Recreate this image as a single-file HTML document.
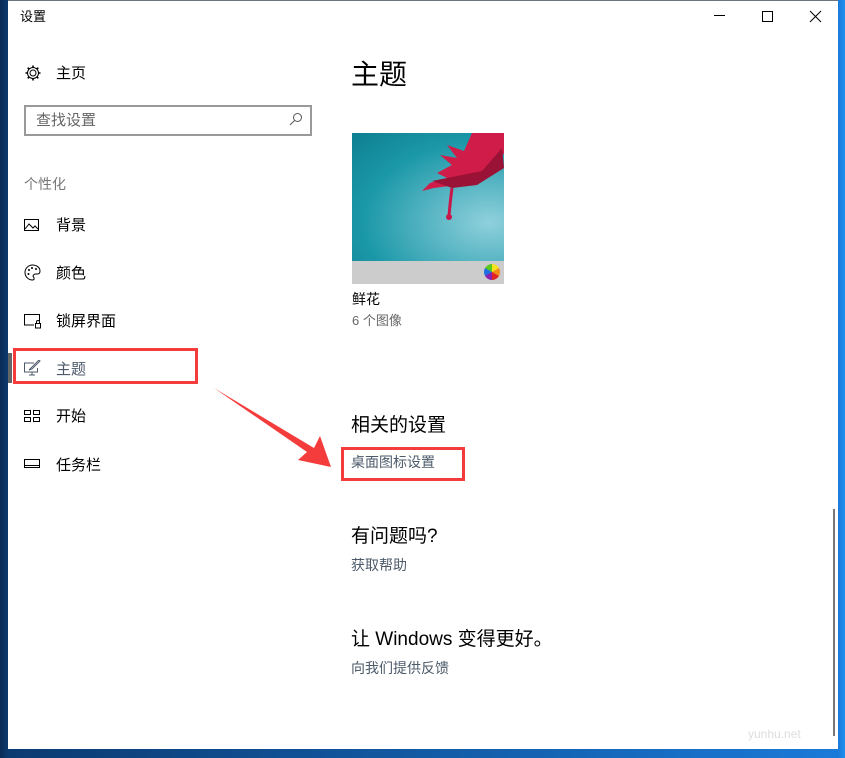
<!DOCTYPE html>
<html><head><meta charset="utf-8">
<style>
*{margin:0;padding:0;box-sizing:border-box}
html,body{width:845px;height:758px;overflow:hidden;font-family:"Liberation Sans","Noto Sans CJK SC",sans-serif}
body{background:linear-gradient(90deg,#0a2a55 0,#0b3a70 8px,#1a7ad8 838px,#1e90f0 845px);position:relative}
.win{position:absolute;left:8px;top:0;width:830px;height:749px;background:#fff;border-top:1px solid #6b7480}
.t{position:absolute;white-space:nowrap}
.nav{font-size:15px;color:#000}
.ic{position:absolute}
.link{color:#4c5a6a;font-size:14px}
.h{font-size:20px;color:#000}
</style></head><body>
<div class="win">
<div class="t" style="left:12px;top:5px;font-size:13px">设置</div>
<div class="t" style="left:706px;top:14px;width:11px;height:1px;background:#000"></div>
<div class="t" style="left:754px;top:10px;width:11px;height:11px;border:1px solid #000"></div>
<svg class="ic" style="left:801px;top:9px" width="13" height="13"><path d="M1 1L12 12M12 1L1 12" stroke="#000" stroke-width="1"/></svg>

<svg class="ic" style="left:16px;top:63px" width="18" height="18" viewBox="0 0 18 18"><circle cx="9" cy="9" r="3" fill="none" stroke="#000"/><path d="M9 1.5v2M9 14.5v2M1.5 9h2M14.5 9h2M3.7 3.7l1.4 1.4M12.9 12.9l1.4 1.4M3.7 14.3l1.4-1.4M12.9 5.1l1.4-1.4" stroke="#000" stroke-width="1.6"/><circle cx="9" cy="9" r="5.5" fill="none" stroke="#000"/></svg>
<div class="t nav" style="left:48px;top:61px">主页</div>
<div class="t" style="left:16px;top:104px;width:288px;height:31px;border:2px solid #999"></div>
<div class="t" style="left:28px;top:108px;font-size:15px;color:#666">查找设置</div>
<svg class="ic" style="left:281px;top:111px" width="14" height="14"><circle cx="8.5" cy="5.5" r="4" fill="none" stroke="#555"/><path d="M5.5 8.5L1 13" stroke="#555"/></svg>
<div class="t" style="left:16px;top:173px;font-size:14px;color:#777">个性化</div>

<svg class="ic" style="left:16px;top:218px" width="16" height="13"><rect x="0.5" y="0.5" width="14" height="11" fill="none" stroke="#000"/><path d="M1 10l4-5 4 4 2-2 3 3" fill="none" stroke="#000"/></svg>
<div class="t nav" style="left:48px;top:213px">背景</div>
<svg class="ic" style="left:16px;top:263px" width="17" height="17"><path d="M8.5 1a7.5 7.5 0 1 0 0 15c2 0 2-2 1-3s0-3 2-3h2c2 0 2.5-1.5 2.5-3C16 3.5 12.5 1 8.5 1z" fill="none" stroke="#000"/><circle cx="5" cy="6" r="1" fill="#000"/><circle cx="8" cy="4" r="1" fill="#000"/><circle cx="12" cy="5" r="1" fill="#000"/><circle cx="4.5" cy="10" r="1" fill="#000"/></svg>
<div class="t nav" style="left:48px;top:261px">颜色</div>
<svg class="ic" style="left:16px;top:313px" width="18" height="15"><path d="M10 11H0.5V0.5h15V7" fill="none" stroke="#000"/><rect x="11.5" y="9.5" width="5" height="4.5" fill="none" stroke="#000"/><path d="M12.5 9.5v-1.5a1.5 1.5 0 0 1 3 0v1.5" fill="none" stroke="#000"/></svg>
<div class="t nav" style="left:48px;top:309px">锁屏界面</div>

<div class="t" style="left:0;top:352px;width:4px;height:30px;background:#666"></div>
<div class="t" style="left:5px;top:347px;width:185px;height:36px;border:3px solid #f43c3c"></div>
<svg class="ic" style="left:16px;top:359px" width="18" height="16"><path d="M10 3H0.5v9h13V8M5 15h6M8 12v3" fill="none" stroke="#4c5a6a"/><path d="M5 10l3-1 8-8-1-1-8 8z" fill="none" stroke="#4c5a6a"/></svg>
<div class="t nav" style="left:48px;top:357px;color:#4c5a6a">主题</div>
<svg class="ic" style="left:16px;top:409px" width="17" height="13"><rect x="0.5" y="0.5" width="6" height="4" fill="none" stroke="#000"/><rect x="9.5" y="0.5" width="6" height="4" fill="none" stroke="#000"/><rect x="0.5" y="7.5" width="6" height="4" fill="none" stroke="#000"/><rect x="9.5" y="7.5" width="6" height="4" fill="none" stroke="#000"/></svg>
<div class="t nav" style="left:48px;top:404px">开始</div>
<svg class="ic" style="left:16px;top:458px" width="17" height="10"><rect x="0.5" y="0.5" width="15" height="8" fill="none" stroke="#000"/><path d="M1 6.5h14" stroke="#000"/></svg>
<div class="t nav" style="left:48px;top:453px">任务栏</div>

<div class="t" style="left:343px;top:52px;font-size:28px">主题</div>
<div class="t" style="left:344px;top:132px;width:152px;height:128px;background:radial-gradient(ellipse at 90% 70%,#8fd0dc 0,#5ab6c4 30%,#1b98a8 65%,#0d7f90 100%);overflow:hidden">
<svg width="152" height="128"><path d="M120 0L152 0 152 20 140 40 125 48 105 52 82 55 70 58 78 50 95 45 85 40 100 32 88 22 105 25 95 12 112 18z" fill="#d01c48"/><path d="M80 48L130 38 150 15 152 35 125 52 100 55z" fill="#9a1236"/><path d="M100 55q-2 15 -3 28" stroke="#c8184a" stroke-width="3" fill="none"/><circle cx="97" cy="84" r="3" fill="#c8184a"/></svg>
</div>
<div class="t" style="left:344px;top:260px;width:152px;height:23px;background:#ccc"></div>
<div class="t" style="left:476px;top:263px;width:16px;height:16px;border-radius:50%;background:conic-gradient(#f6e21a 0 60deg,#f48a1a 60deg 120deg,#e02424 120deg 180deg,#8a1fb0 180deg 240deg,#1f6fe0 240deg 300deg,#5ac81a 300deg 360deg)"></div>
<div class="t" style="left:344px;top:288px;font-size:14px">鲜花</div>
<div class="t" style="left:344px;top:309px;font-size:13px;color:#666">6 个图像</div>

<div class="t h" style="left:343px;top:409px;font-size:19px">相关的设置</div>
<div class="t" style="left:333px;top:446px;width:124px;height:34px;border:3px solid #f43c3c"></div>
<div class="t link" style="left:343px;top:451px">桌面图标设置</div>
<div class="t h" style="left:343px;top:520px;font-size:19px">有问题吗?</div>
<div class="t link" style="left:343px;top:554px">获取帮助</div>
<div class="t h" style="left:343px;top:623px;font-size:19px">让 Windows 变得更好。</div>
<div class="t link" style="left:343px;top:657px">向我们提供反馈</div>

<div class="t" style="left:825px;top:508px;width:2px;height:227px;background:#777"></div>
<div class="t" style="left:740px;top:726px;font-size:12px;color:#ddd">yunhu.net</div>
</div>
<svg class="ic" style="left:0;top:0" width="845" height="758"><path d="M214 388L314 448 320 436 331 467 298 460 307 452z" fill="#f43c3c"/></svg>
</body></html>
